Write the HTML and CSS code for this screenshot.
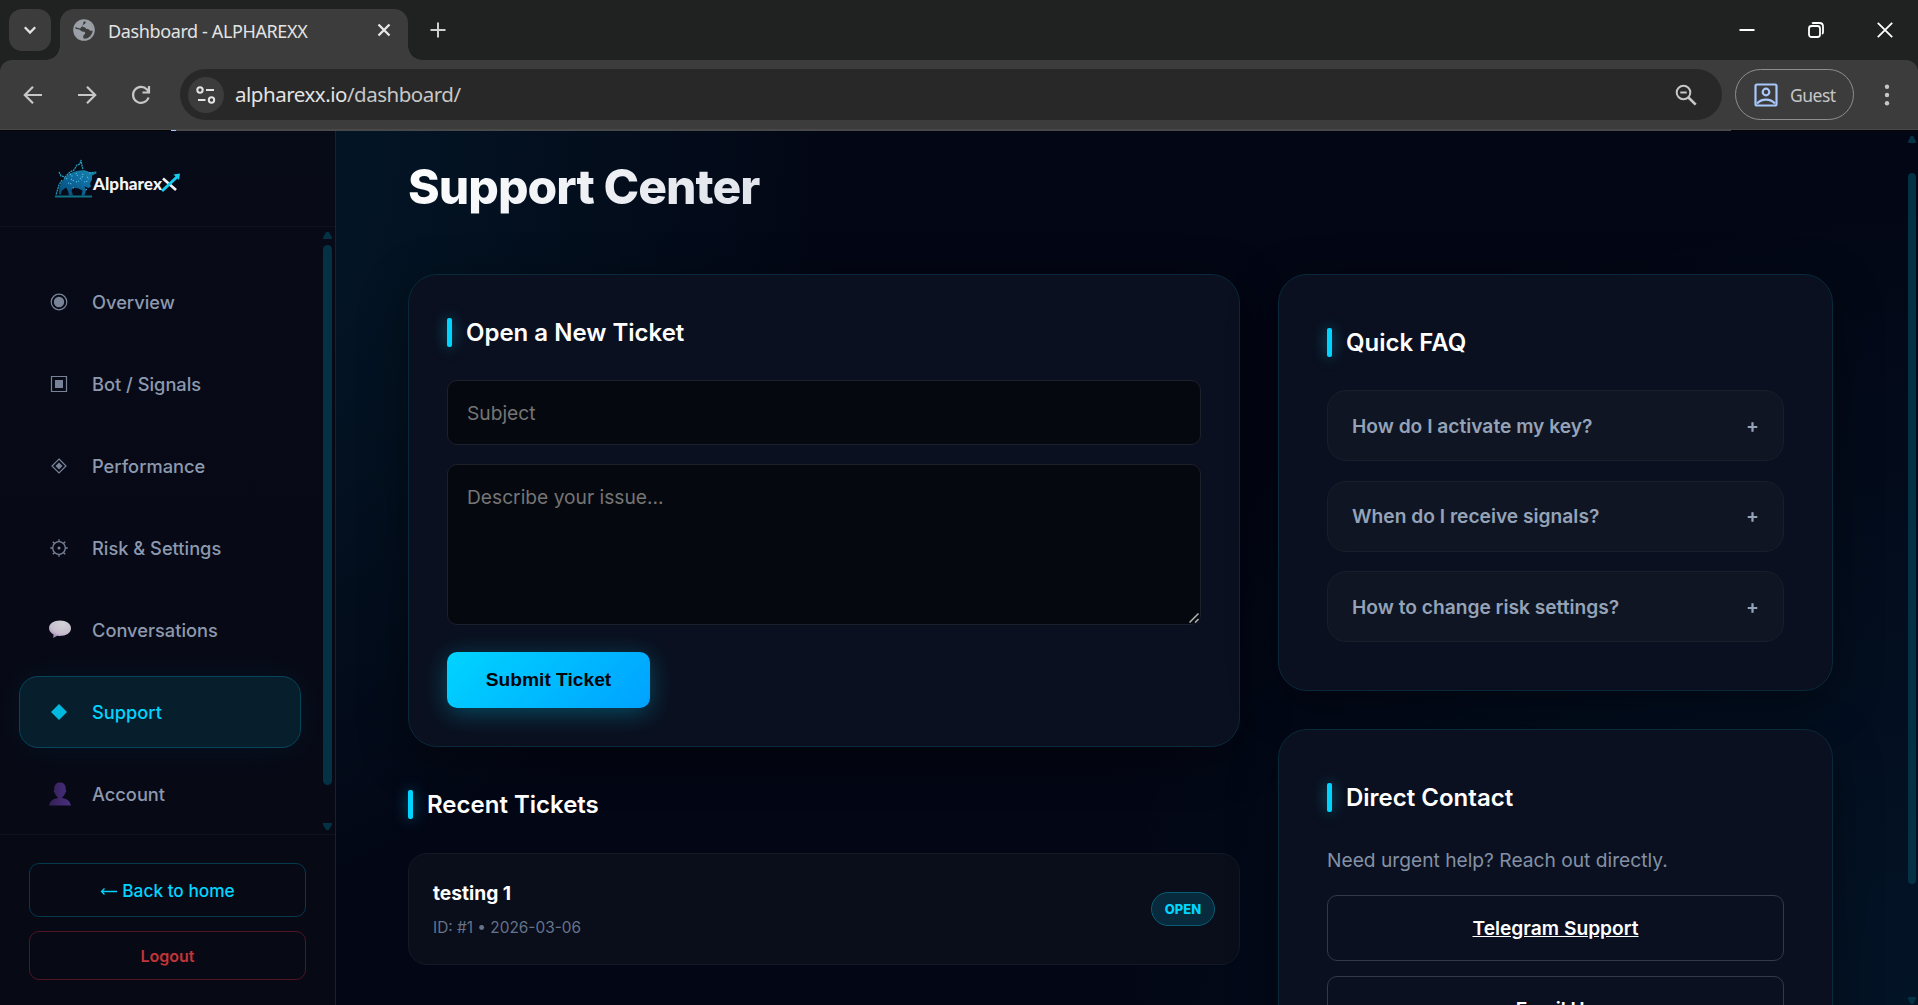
FILE: index.html
```html
<!DOCTYPE html>
<html lang="en">
<head>
<meta charset="UTF-8" />
<meta name="viewport" content="width=device-width, initial-scale=1" />
<title>Dashboard - ALPHAREXX</title>
<link rel="stylesheet" href="styles.css">
</head>
<body>

<!-- Browser window -->
<header class="browser">
  <div class="tabstrip">
    <button class="tab-search"><svg width="14" height="14" viewBox="0 0 14 14"><path d="M1.8 4.3 7 9.5l5.2-5.2" fill="none" stroke="#e3e3e3" stroke-width="2.3"/></svg></button>
    <div class="tab">
      <svg class="globe" width="22" height="22" viewBox="0 0 22 22"><circle cx="11" cy="11" r="9.8" fill="#3c3c3c" stroke="#9aa0a6" stroke-width="2"/><path d="M11 1.5c2 .8 2.500 2 1 3.200-1 1-2.500.6-2.500 2.300 0 1.600 2.500.8 3.300 2.200.8 1.300 2.700.4 3.400 1.600.6 1.200 2.300 1.200 4.300.6C20 7 17 2 11 1.500zM1.500 9.500c3 .8 5 .7 6.500 2.200 1.400 1.500 4 .3 4.200 2.300.1 1.600-1.800 1.600-2 3.200-.1 1.200.4 2 1 3.200C5 20.500 1 15 1.500 9.500z" fill="#9aa0a6"/><path d="M2 8C4 2.500 8 1.500 11 1.500L9.500 7 7 9.500z" fill="#9aa0a6"/></svg>
      <span class="tab-title">Dashboard - ALPHAREXX</span>
      <svg width="14" height="14" viewBox="0 0 14 14"><path d="M1.500 1.500l11 11M12.500 1.500l-11 11" stroke="#e8e8e8" stroke-width="2.300"/></svg>
    </div>
    <svg class="new-tab" width="16" height="16" viewBox="0 0 16 16"><path d="M8 .5v15M.5 8h15" stroke="#d0d0d0" stroke-width="2"/></svg>
    <div class="window-controls">
      <svg width="16" height="16" viewBox="0 0 16 16"><path d="M.5 8h15" stroke="#fff" stroke-width="2"/></svg>
      <svg width="16" height="16" viewBox="0 0 16 16" fill="none" stroke="#fff" stroke-width="1.800"><rect x="1" y="4" width="11" height="11" rx="2.500"/><path d="M4 1.500C4.500 1 5 1 6 1h5.500C13.500 1 15 2.500 15 4.500V10c0 1-.3 1.600-.8 2"/></svg>
      <svg width="16" height="16" viewBox="0 0 16 16"><path d="M.8.8l14.400 14.400M15.200.8.8 15.200" stroke="#fff" stroke-width="1.800"/></svg>
    </div>
  </div>
  <div class="toolbar">
    <div class="nav-buttons">
      <svg width="20" height="20" viewBox="0 0 20 20"><path d="M19 10H2M10 1.800 1.800 10l8.200 8.200" fill="none" stroke="#c7c7c7" stroke-width="2.200"/></svg>
      <svg width="20" height="20" viewBox="0 0 20 20"><path d="M1 10h17M10 1.800l8.200 8.200-8.200 8.200" fill="none" stroke="#c7c7c7" stroke-width="2.200"/></svg>
      <svg width="20" height="20" viewBox="0 0 20 20"><path d="M17.600 12.500A8 8 0 1 1 16 4.500l2 2.300M18 1v6.500h-6.500" fill="none" stroke="#c7c7c7" stroke-width="2.200"/></svg>
    </div>
    <div class="omnibox">
      <span class="site-info"><svg width="20" height="18" viewBox="0 0 20 18" fill="none" stroke="#e3e3e3" stroke-width="2"><circle cx="4" cy="4" r="2.700"/><path d="M10 4h8M2 14h7.500"/><circle cx="15.500" cy="14" r="2.700"/></svg></span>
      <span class="url">alpharexx.io<em>/dashboard/</em></span>
      <svg class="zoom-icon" width="22" height="22" viewBox="0 0 22 22" fill="none" stroke="#c7c7c7" stroke-width="2"><circle cx="8.500" cy="8.500" r="6.800"/><path d="M13.500 13.500l7.200 7.200" stroke-width="2.600"/><path d="M5.300 8.500h6.400"/></svg>
    </div>
    <div class="profile">
      <svg width="24" height="24" viewBox="0 0 24 24" fill="none" stroke="#a8c7fa" stroke-width="2.200"><rect x="1.500" y="1.500" width="21" height="21" rx="1.500"/><circle cx="12" cy="9" r="3.300"/><path d="M3 20.500c4.500-5.300 13.500-5.300 18 0"/></svg>
      <span>Guest</span>
    </div>
    <svg class="menu" width="6" height="22" viewBox="0 0 6 22" fill="#c7c7c7"><circle cx="3" cy="2.800" r="2.200"/><circle cx="3" cy="11" r="2.200"/><circle cx="3" cy="19.200" r="2.200"/></svg>
  </div>
  <div class="load-bar"><span class="load-done"></span><span class="load-dot"></span><span class="load-rest"></span></div>
</header>

<div class="app">
  <aside class="sidebar">
    <div class="brand">
      <svg width="130" height="44" viewBox="0 0 130 44">
        <defs>
          <linearGradient id="bull" x1="0" y1="1" x2="1" y2="0"><stop offset="0" stop-color="#075a91"/><stop offset=".6" stop-color="#1185c4"/><stop offset="1" stop-color="#22a7d0"/></linearGradient>
        </defs>
        <path d="M5 37c0-6 1-11 5-15 4-5 8-7 13-8 5-1 9-1 12 1l8 1-5 2.500 0 4-2 4 1 3-2.500 1.500-4-1.500 1.500 4-1.500 5h-3l1-5-4-2-5-1-2 3 1.500 5h-4l-1-4.500-2-3.500-4 3-1.500 4.500z" fill="url(#bull)" opacity=".8"/>
        <path d="M8 23l-3 5-3 10M5 15l2 4 4 1 5-5 4-2 3-5 3-1 1-4 1 6 1 3M35 16l8-1" fill="none" stroke="#1fa2bd" stroke-width="1.300" stroke-dasharray="2 .7"/>
        <path d="M10 21l4 1M16 17l3 3M22 16l2 4M29 17l-1 4M14 26l4 1M22 25l3-1M30 25l4-1M33 20l2 2M19 31l2-1M32 32l1 2M26 21l2 2M17 22l3 2" stroke="#52bce5" stroke-width="1.200" stroke-dasharray="1.200 1"/>
        <path d="M1 39.500h37" stroke="#0d7186" stroke-width="1.800"/>
        <text x="39" y="32.500" class="brand-text" textLength="69" lengthAdjust="spacingAndGlyphs">Alpharex</text>
        <path d="M109 21.500 122 33" stroke="#f4f4f6" stroke-width="2.600"/>
        <path d="M108 34 123 20" stroke="#19cbee" stroke-width="3"/>
        <path d="M119.500 17.500 126 16.500l-1 6.500z" fill="#19cbee"/>
      </svg>
    </div>

    <div class="nav-wrap">
      <nav class="nav">
        <a class="nav-item"><svg class="ico" viewBox="0 0 18 18"><circle cx="9" cy="9" r="7.800" fill="none" stroke="currentColor" stroke-width="1.200"/><circle cx="9" cy="9" r="5.200" fill="currentColor"/></svg>Overview</a>
        <a class="nav-item"><svg class="ico" viewBox="0 0 18 18"><path d="M1.500 1.500h15v15h-15z" fill="none" stroke="currentColor" stroke-width="1.200"/><path d="M5 5h8v8H5z" fill="currentColor"/></svg>Bot / Signals</a>
        <a class="nav-item"><svg class="ico" viewBox="0 0 18 18"><path d="M9 2l7 7-7 7-7-7z" fill="none" stroke="currentColor" stroke-width="1.200"/><path d="M9 5.500 12.500 9 9 12.500 5.500 9z" fill="currentColor"/></svg>Performance</a>
        <a class="nav-item"><svg class="ico" viewBox="0 0 18 18"><circle cx="9" cy="9" r="6.300" fill="none" stroke="currentColor" stroke-width="1.300"/><circle cx="9" cy="9" r="1.500" fill="currentColor"/><path d="M9 .3v2.500M9 15.200v2.500M.3 9h2.500M15.200 9h2.500M2.800 2.800l1.700 1.700M13.500 13.500l1.700 1.700M15.200 2.800l-1.700 1.700M4.500 13.500l-1.700 1.700" stroke="currentColor" stroke-width="1.300"/></svg>Risk &amp; Settings</a>
        <a class="nav-item"><svg class="ico emoji" viewBox="0 0 22 22"><defs><radialGradient id="talk" cx=".6" cy=".2" r=".8"><stop offset="0" stop-color="#d4d3d7"/><stop offset=".7" stop-color="#c6bccd"/><stop offset="1" stop-color="#9c83b5"/></radialGradient></defs><path d="M11 1.500c6 0 11 3 11 7.800S17 17 11 17c-1 0-2 0-2.800-.2L4.200 19l.3-3.600C1.800 14 0 12 0 9.300 0 4.500 5 1.500 11 1.500z" fill="url(#talk)"/></svg>Conversations</a>
        <a class="nav-item active"><svg class="ico" viewBox="0 0 18 18"><path d="M9 1l8 8-8 8-8-8z" fill="currentColor"/></svg>Support</a>
        <a class="nav-item"><svg class="ico emoji" viewBox="0 0 22 24"><defs><linearGradient id="bust" x2="1"><stop offset="0" stop-color="#332055"/><stop offset="1" stop-color="#4a3080"/></linearGradient></defs><path d="M11 .5c4 0 6 2.500 5.800 7.500.8.300.6 2.500-.5 2.700-.6 2.300-1.800 3.500-3 4.300l.2 1.300c4.500.6 7.500 2.700 8.500 7.200H0c1-4.500 4-6.600 8.500-7.200l.2-1.300c-1.200-.8-2.400-2-3-4.300-1.100-.2-1.300-2.400-.5-2.700C5 3 7 .5 11 .5z" fill="url(#bust)"/></svg>Account</a>
      </nav>
      <div class="scroll side-scroll"><i class="up"></i><b></b><i class="down"></i></div>
    </div>

    <div class="side-foot">
      <a class="btn-home"><svg width="17" height="10" viewBox="0 0 17 10"><path d="M17 6.500H1.500M4.500 3.500l-3 3 3 3" fill="none" stroke="currentColor" stroke-width="1.300"/></svg>Back to home</a>
      <a class="btn-logout">Logout</a>
    </div>
  </aside>

  <main class="main">
    <h1>Support Center</h1>
    <div class="grid">
      <div class="col">
        <section class="card ticket-form">
          <h2>Open a New Ticket</h2>
          <input type="text" placeholder="Subject" />
          <div class="area">
            <textarea placeholder="Describe your issue..."></textarea>
            <svg class="grip" width="10" height="10" viewBox="0 0 10 10"><path d="M.5 9.500l9-9M6 9.500l3.500-3.500" stroke="#b4b4b4" stroke-width="1.500"/></svg>
          </div>
          <button class="submit">Submit Ticket</button>
        </section>
        <h2 class="recent">Recent Tickets</h2>
        <div class="ticket">
          <div>
            <div class="ticket-title">testing 1</div>
            <div class="ticket-meta">ID: #1 • 2026-03-06</div>
          </div>
          <span class="badge">OPEN</span>
        </div>
      </div>
      <div class="col">
        <section class="card side-card">
          <h2>Quick FAQ</h2>
          <div class="faq"><span>How do I activate my key?</span><span class="plus">+</span></div>
          <div class="faq"><span>When do I receive signals?</span><span class="plus">+</span></div>
          <div class="faq"><span>How to change risk settings?</span><span class="plus">+</span></div>
        </section>
        <section class="card side-card contact">
          <h2>Direct Contact</h2>
          <p>Need urgent help? Reach out directly.</p>
          <a class="contact-btn">Telegram Support</a>
          <a class="contact-btn">Email Us</a>
        </section>
      </div>
    </div>
  </main>
  <div class="scroll page-scroll"><i class="up"></i><b></b><i class="down"></i></div>
</div>

</body>
</html>
```
FILE: styles.css
```css
* {
  box-sizing: border-box;
}
body {
  margin: 0;
  height: 100vh;
  display: flex;
  flex-direction: column;
  overflow: hidden;
  background: #030512;
  color: #fff;
  font-family: Inter, sans-serif;
}
svg {
  display: block;
  flex: none;
}

/* browser */
.browser {
  height: 131px;
  flex: none;
  background: #202222;
  font-family: "Noto Sans", sans-serif;
}
.tabstrip {
  height: 60px;
  padding-left: 9px;
  display: flex;
  align-items: center;
}
.tab-search {
  width: 42px;
  height: 42px;
  padding: 0;
  border: none;
  border-radius: 13px;
  background: #3c3c3c;
  display: flex;
  align-items: center;
  justify-content: center;
}
.tab {
  position: relative;
  width: 348px;
  height: 51px;
  margin: 9px 0 0 9px;
  padding: 0 17px 9px 13px;
  border-radius: 14px 14px 0 0;
  background: #3c3c3c;
  display: flex;
  align-items: center;
}
.tab::before, .tab::after {
  content: "";
  position: absolute;
  bottom: 0;
  width: 14px;
  height: 14px;
}
.tab::before {
  left: -14px;
  background: radial-gradient(circle at 0 0, transparent 13.5px, #3c3c3c 14px);
}
.tab::after {
  right: -14px;
  background: radial-gradient(circle at 100% 0, transparent 13.5px, #3c3c3c 14px);
}
.tab-title {
  flex: 1;
  margin-left: 13px;
  padding-top: 1px;
  font-size: 18px;
  letter-spacing: -0.38px;
  color: #e3e3e3;
}
.new-tab {
  margin-left: 22px;
}
.window-controls {
  margin-left: auto;
  padding-right: 25px;
  display: flex;
  gap: 53px;
}
.toolbar {
  height: 69px;
  padding: 0 28px 0 23px;
  border-radius: 12px 12px 0 0;
  background: #3c3c3c;
  display: flex;
  align-items: center;
}
.nav-buttons {
  display: flex;
  gap: 34px;
}
.omnibox {
  width: 1542px;
  height: 51px;
  margin-left: 29px;
  padding: 0 25px 0 8px;
  border-radius: 26px;
  background: #282828;
  display: flex;
  align-items: center;
}
.site-info {
  width: 36px;
  height: 36px;
  border-radius: 50%;
  background: #3c3c3c;
  display: flex;
  align-items: center;
  justify-content: center;
}
.url {
  flex: 1;
  margin-left: 11px;
  padding-bottom: 1px;
  font-size: 20.5px;
  letter-spacing: -0.48px;
  color: #e3e3e3;
}
.url em {
  font-style: normal;
  color: #c7c7c7;
}
.profile {
  width: 119px;
  height: 51px;
  margin-left: 13px;
  padding-left: 18px;
  border: 1px solid #8e8e8e;
  border-radius: 26px;
  display: flex;
  align-items: center;
  gap: 12px;
  font-size: 17.5px;
  letter-spacing: -0.5px;
  color: #c7c7c7;
}
.menu {
  margin-left: 30px;
}
.load-bar {
  height: 2px;
  display: flex;
  background: #050505;
  border-top: 1px solid #484848;
}
.load-done {
  width: 171px;
}
.load-dot {
  width: 5px;
  background: #a8c7fa;
}
.load-rest {
  width: 1555px;
  background: #484848;
}

/* layout */
.app {
  flex: 1;
  min-height: 0;
  display: flex;
  background:
    radial-gradient(circle at 0 0, rgba(0, 212, 255, 0.12), transparent 860px),
    radial-gradient(circle at 100% 100%, rgba(0, 180, 255, 0.08), transparent 860px),
    #030614;
}
.sidebar {
  width: 336px;
  flex: none;
  border-right: 1px solid #08283a;
  background: linear-gradient(#070b17, #070915);
  display: flex;
  flex-direction: column;
}
.brand {
  height: 96px;
  flex: none;
  padding: 26px 0 0 54px;
  border-bottom: 1px solid #10131f;
}
.brand-text {
  font-family: Lato, sans-serif;
  font-weight: 900;
  font-size: 16px;
  fill: #f4f4f6;
}
.nav-wrap {
  height: 607px;
  flex: none;
  display: flex;
  justify-content: space-between;
  padding-right: 3px;
}
.nav {
  width: 301px;
  padding: 39px 0 0 19px;
  display: flex;
  flex-direction: column;
  gap: 10px;
}
.nav-item {
  height: 72px;
  flex: none;
  padding-left: 30px;
  border: 1px solid transparent;
  border-radius: 19px;
  display: flex;
  align-items: center;
  font-size: 18.25px;
  font-weight: 500;
  color: #8d99af;
}
.ico {
  width: 18px;
  height: 18px;
  margin-right: 24px;
  opacity: 0.85;
}
.ico.emoji {
  width: 22px;
  height: 24px;
  margin: 0 21px 0 -1px;
  opacity: 1;
}
.nav-item.active {
  color: #00d4ff;
  background: #071e2c;
  border-color: #08445a;
  box-shadow: 0 0 36px rgba(0, 212, 255, 0.05);
}
.scroll {
  display: flex;
  flex-direction: column;
  align-items: center;
}
.scroll b {
  width: 100%;
  border-radius: 5px;
  background: #043144;
}
.scroll i {
  width: 100%;
  height: 7px;
  background: #043144;
}
.up {
  clip-path: polygon(35% 0, 65% 0, 100% 75%, 100% 100%, 0 100%, 0 75%);
}
.down {
  clip-path: polygon(0 0, 100% 0, 100% 25%, 65% 100%, 35% 100%, 0 25%);
}
.side-scroll {
  width: 9px;
  padding-top: 5px;
}
.side-scroll b {
  height: 540px;
  margin: 6px 0 38px;
}
.side-foot {
  flex: 1;
  padding: 28px 29px 0;
  border-top: 1px solid #10131f;
}
.btn-home, .btn-logout {
  display: flex;
  align-items: center;
  justify-content: center;
  border-radius: 10px;
}
.btn-home {
  height: 54px;
  gap: 5px;
  border: 1px solid #05394c;
  font-size: 17.3px;
  font-weight: 500;
  color: #00d4ff;
}
.btn-logout {
  height: 49px;
  margin-top: 14px;
  border: 1px solid #4e1722;
  font-size: 16px;
  font-weight: 600;
  color: #c23437;
}

/* support page */
.main {
  flex: 1;
  min-width: 0;
  padding: 0 73px 0 72px;
  overflow: hidden;
}
h1 {
  width: max-content;
  height: 58px;
  margin: 27px 0 58px;
  line-height: 58px;
  font-size: 48px;
  font-weight: 800;
  letter-spacing: -0.96px;
  background: linear-gradient(135deg, #fff, #dfe2ea);
  background-clip: text;
  -webkit-background-clip: text;
  color: transparent;
}
.grid {
  display: grid;
  grid-template-columns: 832px 555px;
  gap: 38px;
}
.card {
  border: 1px solid #082a3b;
  border-radius: 29px;
  background: #0a101f;
  box-shadow: 0 12px 48px rgba(0, 0, 0, 0.4);
}
h2 {
  height: 29px;
  margin: 0;
  display: flex;
  align-items: center;
  gap: 14px;
  font-size: 24px;
  font-weight: 600;
}
h2::before {
  content: "";
  width: 5px;
  height: 29px;
  border-radius: 2px;
  background: #00d4ff;
  box-shadow: 0 0 14px rgba(0, 212, 255, 0.5);
}
.ticket-form {
  height: 473px;
  padding: 43px 38px 0;
  display: flex;
  flex-direction: column;
}
input, textarea {
  width: 100%;
  display: block;
  border: 1px solid #1c202a;
  border-radius: 10px;
  background: #05080f;
  padding: 20px 19px;
  font-family: inherit;
  font-size: 19.2px;
  color: #fff;
  flex: none;
}
input {
  height: 65px;
  margin: 33px 0 19px;
}
.area {
  position: relative;
}
textarea {
  height: 161px;
  resize: none;
}
.grip {
  position: absolute;
  right: 2px;
  bottom: 2px;
}
input::placeholder, textarea::placeholder {
  color: #757575;
}
.submit {
  width: 203px;
  height: 56px;
  flex: none;
  margin-top: 27px;
  padding: 0;
  border: none;
  border-radius: 10px;
  background: linear-gradient(135deg, #00d4ff, #00a2ff);
  box-shadow: 0 5px 24px rgba(0, 212, 255, 0.3);
  font-family: "Liberation Sans", sans-serif;
  font-size: 19.2px;
  font-weight: 700;
  color: #02060c;
}
.recent {
  margin: 43px 0 34px;
}
.ticket {
  height: 112px;
  padding: 0 24px;
  border: 1px solid #151925;
  border-radius: 19px;
  background: #0a0d1a;
  display: flex;
  align-items: center;
  justify-content: space-between;
}
.ticket-title {
  font-size: 19.2px;
  font-weight: 700;
  line-height: 29px;
}
.ticket-meta {
  margin-top: 8px;
  font-size: 15.4px;
  line-height: 23px;
  color: #64748b;
}
.badge {
  width: 64px;
  height: 34px;
  border: 1px solid #075d73;
  border-radius: 17px;
  background: #072a3c;
  font-size: 13px;
  font-weight: 800;
  line-height: 32px;
  text-align: center;
  color: #00d4ff;
}
.side-card {
  height: 417px;
  padding: 53px 48px 0;
}
.side-card h2 {
  margin-bottom: 33px;
}
.faq {
  height: 71px;
  margin-bottom: 19.5px;
  padding: 0 24px;
  border: 1px solid #181e2a;
  border-radius: 19px;
  background: #0f1523;
  display: flex;
  align-items: center;
  justify-content: space-between;
  font-size: 19.2px;
  font-weight: 600;
  color: #94a3b8;
}
.contact {
  margin-top: 38px;
}
.contact h2 {
  margin-bottom: 34px;
}
.contact p {
  margin: 0 0 20px;
  font-size: 19.2px;
  line-height: 29px;
  color: #8490a5;
}
.contact-btn {
  height: 66px;
  margin-bottom: 15px;
  border: 1px solid #343947;
  border-radius: 10px;
  display: flex;
  align-items: center;
  justify-content: center;
  font-size: 19.2px;
  font-weight: 600;
  text-decoration: underline;
}
.page-scroll {
  width: 10px;
  padding: 5px 2px 0 0;
  flex: none;
}
.page-scroll b {
  height: 711px;
  flex: none;
  margin: 30px 0 113px;
}
.page-scroll i {
  flex: none;
}
```
